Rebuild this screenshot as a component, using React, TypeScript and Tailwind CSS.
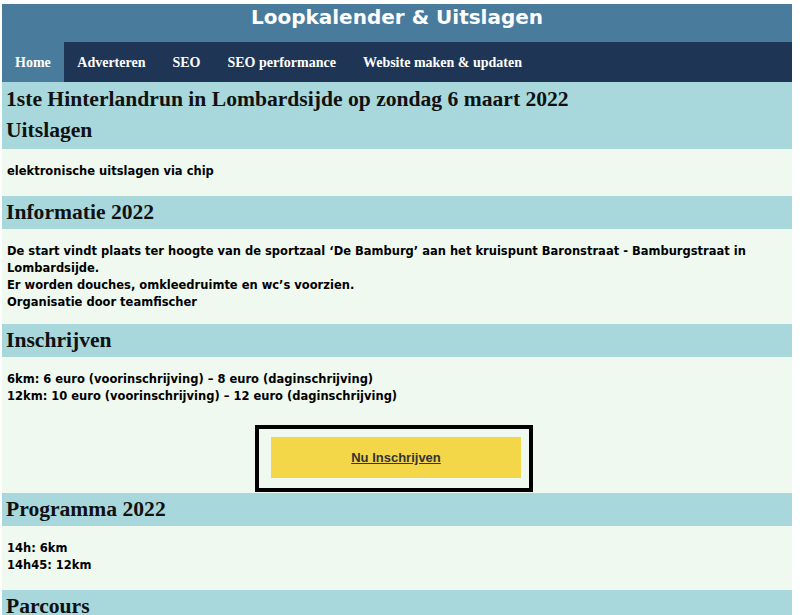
import React from "react";

const serif = { fontFamily: '"Liberation Serif", "Times New Roman", serif' };
const sans = { fontFamily: '"DejaVu Sans", Verdana, sans-serif' };
const arial = { fontFamily: '"Liberation Sans", Arial, sans-serif' };

function Heading({ children }: { children: React.ReactNode }) {
  return (
    <h2 className="bg-[#a8d8db] px-[4px] text-[21.6px] font-bold leading-[33px] text-[#111]" style={serif}>
      {children}
    </h2>
  );
}

const body = "bg-[#f0f9f0] px-[5px] text-[11.5px] font-bold leading-[17px] text-black";

export default function App() {
  return (
    <div className="h-[615px] overflow-hidden bg-white pl-[2px] pt-[4px] pr-[8px]">
      <div className="w-[790px]">
        <div className="flex h-[38px] justify-center bg-[#497b9d]">
          <h1 className="text-[20px] font-bold leading-[26px] text-white" style={sans}>
            Loopkalender &amp; Uitslagen
          </h1>
        </div>
        <nav className="flex h-[40px] bg-[#1e3556] text-[14px] font-bold text-white" style={serif}>
          <a className="flex items-center bg-[#497b9d] px-[13px]">Home</a>
          <a className="flex items-center px-[13.5px]">Adverteren</a>
          <a className="flex items-center px-[13.5px]">SEO</a>
          <a className="flex items-center px-[13.5px]">SEO performance</a>
          <a className="flex items-center px-[13.5px]">Website maken &amp; updaten</a>
        </nav>
        <div className="bg-[#a8d8db] px-[4px] pt-[2px]">
          <h1 className="text-[21.6px] font-bold leading-[30px] text-[#111]" style={serif}>
            1ste Hinterlandrun in Lombardsijde op zondag 6 maart 2022
          </h1>
          <h2 className="pb-[2px] text-[21.6px] font-bold leading-[33px] text-[#111]" style={serif}>
            Uitslagen
          </h2>
        </div>
        <div className={`${body} pt-[14px] pb-[16px]`} style={sans}>
          <p>elektronische uitslagen via chip</p>
        </div>
        <Heading>Informatie 2022</Heading>
        <div className={`${body} pt-[14px] pb-[13px]`} style={sans}>
          <p>
            De start vindt plaats ter hoogte van de sportzaal ‘De Bamburg’ aan het kruispunt Baronstraat - Bamburgstraat in
            Lombardsijde.
            <br />
            Er worden douches, omkleedruimte en wc’s voorzien.
            <br />
            Organisatie door teamfischer
          </p>
        </div>
        <Heading>Inschrijven</Heading>
        <div className={`${body} pt-[14px] pb-[1px]`} style={sans}>
          <p>
            6km: 6 euro (voorinschrijving) – 8 euro (daginschrijving)
            <br />
            12km: 10 euro (voorinschrijving) – 12 euro (daginschrijving)
          </p>
          <div className="flex justify-center pt-[20px]">
            <div className="mr-[6px] border-[4px] border-black pb-[10px] pl-[12px] pr-[8px] pt-[8px]">
              <a
                className="flex h-[41px] w-[250px] items-center justify-center bg-[#f4d748] text-[13px] font-bold text-[#333] underline"
                style={arial}
              >
                Nu Inschrijven
              </a>
            </div>
          </div>
        </div>
        <Heading>Programma 2022</Heading>
        <div className={`${body} pt-[14px] pb-[16px]`} style={sans}>
          <p>
            14h: 6km
            <br />
            14h45: 12km
          </p>
        </div>
        <Heading>Parcours</Heading>
        <div className="h-[40px] bg-[#f0f9f0]" />
      </div>
    </div>
  );
}
